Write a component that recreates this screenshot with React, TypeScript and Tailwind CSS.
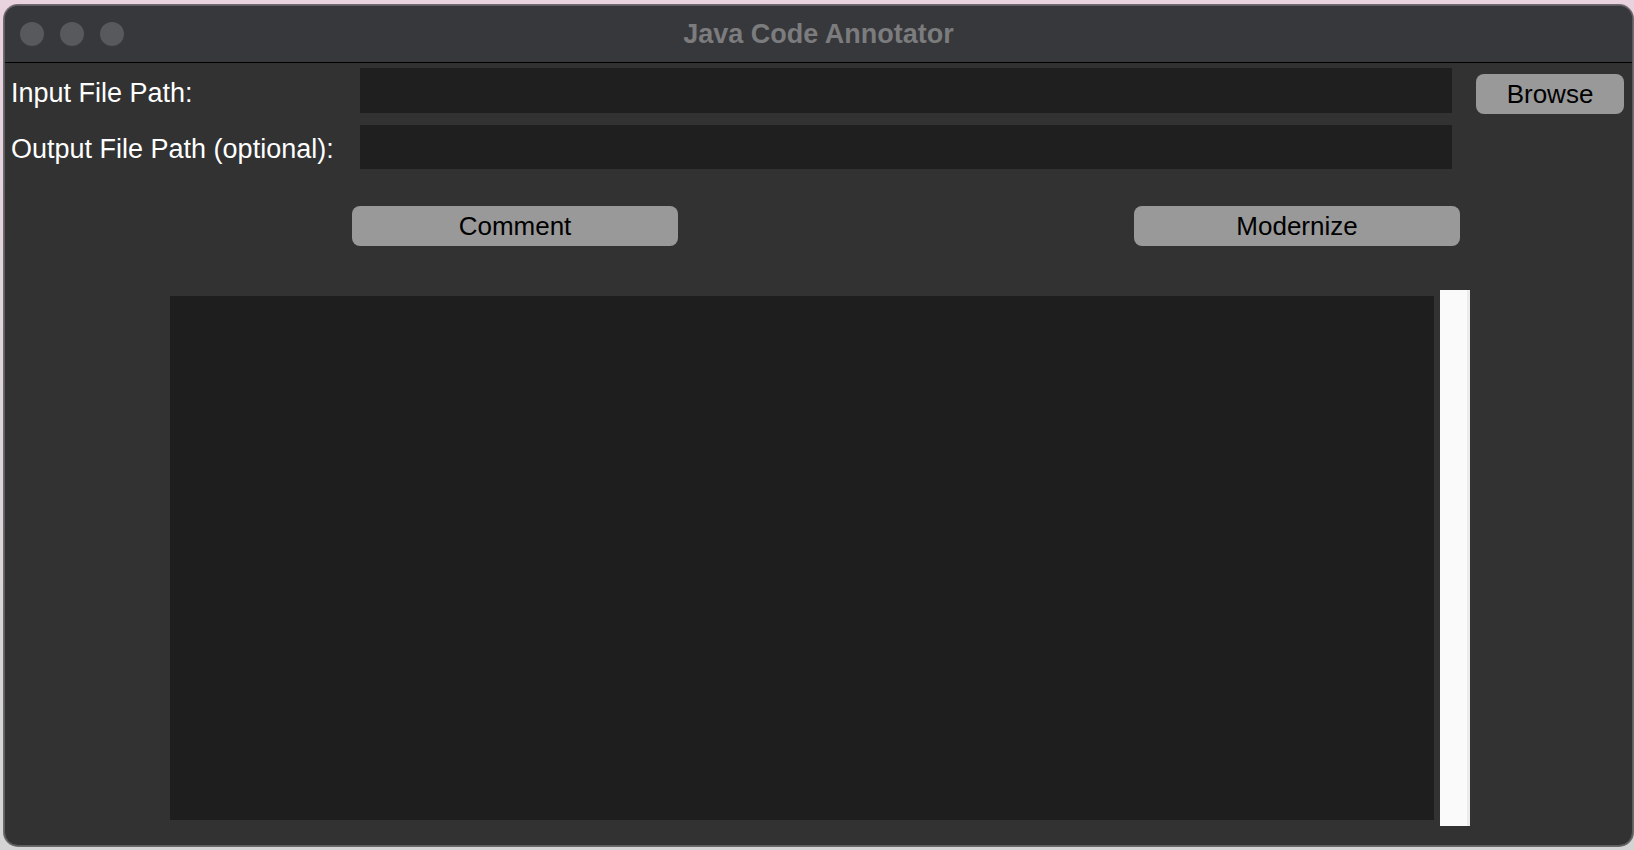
const FONT = { fontFamily: '"Liberation Sans", Arial, sans-serif' };

const TrafficLight = () => <div className="w-[24px] h-[24px] rounded-full bg-[#58595c]" />;

const GrayButton = ({ label, className }: { label: string; className: string }) => (
  <button
    className={`h-[40px] rounded-[8px] bg-[#999999] text-[26px] leading-none text-black flex items-center justify-center ${className}`}
  >
    {label}
  </button>
);

export default function App() {
  return (
    <div
      className="w-[1634px] h-[850px] overflow-hidden bg-gradient-to-b from-[#e8d3df] via-[#dcd6da] to-[#d4d4d4] pt-[5px] pl-[4px]"
      style={FONT}
    >
      <div className="w-[1629px] h-[841px] rounded-[14px] border border-[#5e5e60] bg-[#323232] overflow-hidden flex flex-col shadow-[0_0_0_1px_rgba(0,0,0,0.5)]">
        {/* Title bar */}
        <div className="h-[57px] shrink-0 bg-[#37383b] border-b border-black grid grid-cols-[1fr_auto_1fr] items-center">
          <div className="flex items-center gap-[16px] pl-[15px]">
            <TrafficLight />
            <TrafficLight />
            <TrafficLight />
          </div>
          <div className="text-[27px] font-bold text-[#7c7c7e] leading-none">Java Code Annotator</div>
          <div />
        </div>

        {/* Content */}
        <div className="flex-1 flex flex-col pt-[5px] pl-[5px] text-white">
          {/* Input row */}
          <div className="flex items-start">
            <label className="w-[350px] h-[45px] flex items-center pt-[5px] text-[27px] leading-none pl-[1px]">
              Input File Path:
            </label>
            <div className="w-[1092px] h-[45px] bg-[#1f1f1f]" />
            <GrayButton label="Browse" className="ml-[24px] mt-[6px] w-[148px]" />
          </div>

          {/* Output row */}
          <div className="flex items-start mt-[11px]">
            <label className="w-[350px] h-[44px] flex items-center pt-[5px] text-[27px] leading-none pl-[1px]">
              Output File Path (optional):
            </label>
            <div className="w-[1092px] h-[44px] bg-[#1f1f1f]" />
          </div>

          {/* Action buttons */}
          <div className="flex mt-[37px]">
            <GrayButton label="Comment" className="ml-[342px] w-[326px]" />
            <GrayButton label="Modernize" className="ml-[456px] w-[326px]" />
          </div>

          {/* Output text area + scrollbar */}
          <div className="flex items-start mt-[44px]">
            <div className="ml-[160px] mt-[6px] w-[1264px] h-[524px] bg-[#1e1e1e]" />
            <div className="ml-[6px] w-[30px] h-[536px] bg-[#fafafa] border-r-[3px] border-[#ececec]" />
          </div>
        </div>
      </div>
    </div>
  );
}
